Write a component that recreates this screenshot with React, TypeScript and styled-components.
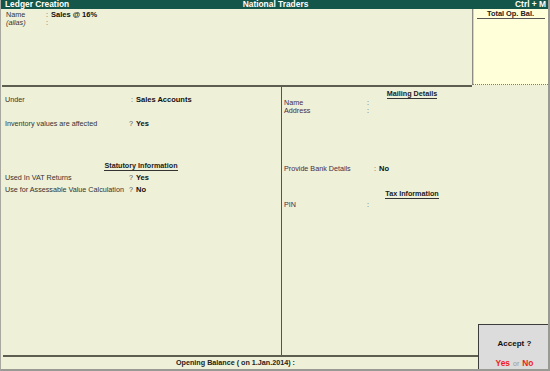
import styled, { createGlobalStyle } from "styled-components";

const GlobalStyle = createGlobalStyle`
  html, body {
    margin: 0;
    padding: 0;
    background: #eef0d7;
  }
  * {
    box-sizing: border-box;
  }
`;

const Screen = styled.div`
  position: relative;
  width: 550px;
  height: 371px;
  display: flex;
  flex-direction: column;
  background: #eef0d7;
  border-left: 1px solid #a8a8a0;
  border-right: 2px solid #9a9a94;
  border-bottom: 2px solid #9a9a94;
  font-family: "Liberation Sans", Arial, sans-serif;
  font-size: 7.2px;
  color: #333;
  overflow: hidden;
`;

const TitleBar = styled.div`
  height: 9px;
  flex: 0 0 9px;
  display: grid;
  grid-template-columns: 1fr auto 1fr;
  align-items: center;
  padding: 0 2px 0 4px;
  background: #14574a;
  color: #fff;
  font-weight: bold;
  font-size: 8.4px;
  line-height: 9px;
  white-space: nowrap;
`;

const TitleRight = styled.span`
  justify-self: end;
`;

const Top = styled.div`
  height: 78px;
  flex: 0 0 78px;
  display: flex;
`;

const TopMain = styled.div`
  flex: 1;
  padding: 2px 4px 0;
  border-bottom: 2px solid #5d5d50;
  margin-left: 1px;
`;

const OpBalBox = styled.div`
  width: 76px;
  height: 76px;
  background: #ffffd9;
  border-left: 1px solid #8c8c84;
  border-bottom: 1px dotted #7c7c74;
  box-shadow: inset 1px 0 0 #d4d4c4;
  padding-top: 1px;
  display: flex;
  flex-direction: column;
  align-items: center;
`;

const OpBalTitle = styled.div`
  width: 68px;
  text-align: center;
  font-weight: bold;
  font-size: 7.4px;
  line-height: 8px;
  color: #222;
  border-bottom: 1px solid #555;
`;

const Row = styled.div<{ $labelWidth: number; $gap?: number }>`
  display: grid;
  grid-template-columns: ${(p) => p.$labelWidth}px auto 1fr;
  line-height: 8px;
  height: 8px;
  margin-top: ${(p) => p.$gap ?? 0}px;
  white-space: nowrap;
`;

const Label = styled.span<{ $italic?: boolean; $tone?: "left" | "right" }>`
  color: ${(p) => (p.$tone === "right" ? "#4c2944" : "#333")};
  font-style: ${(p) => (p.$italic ? "italic" : "normal")};
`;

const Mark = styled.span`
  color: #555;
  padding-right: 3px;
`;

const Value = styled.span`
  font-weight: bold;
  font-size: 7.5px;
  color: #111;
`;

const Middle = styled.div`
  flex: 1;
  display: flex;
`;

const LeftPane = styled.div`
  width: 280px;
  padding: 9px 4px 0;
`;

const RightPane = styled.div`
  flex: 1;
  border-left: 1px solid #55554a;
  padding: 3px 2px 0 2px;
`;

const SectionHead = styled.div<{ $gap: number; $shift?: number }>`
  margin-top: ${(p) => p.$gap}px;
  text-align: center;
  line-height: 8px;
  height: 9px;
  font-weight: bold;
  font-size: 7.2px;
  color: #222;
  padding-right: ${(p) => p.$shift ?? 0}px;
`;

const Underlined = styled.span`
  border-bottom: 1px solid #333;
`;

const Footer = styled.div`
  height: 14px;
  flex: 0 0 14px;
  margin-left: 2px;
  border-top: 2px solid #5d5d50;
  padding-right: 80px;
  text-align: center;
  line-height: 12px;
  font-weight: bold;
  font-size: 7.2px;
  color: #222;
`;

const AcceptBox = styled.div`
  position: absolute;
  left: 477px;
  top: 324px;
  width: 74px;
  height: 48px;
  background: #dcdcdc;
  border: 1px solid #3c3c3c;
  border-right-width: 2px;
  display: flex;
  flex-direction: column;
  align-items: center;
  justify-content: space-between;
  padding: 14px 0 2px;
  font-weight: bold;
`;

const AcceptTitle = styled.div`
  font-size: 8px;
  line-height: 9px;
  color: #111;
`;

const Choices = styled.div`
  font-size: 8.4px;
  line-height: 10px;
  color: #f01a1a;
`;

const Or = styled.span`
  color: #9a9a9a;
  font-weight: normal;
  font-size: 7px;
  padding: 0 3px;
`;

export default function App() {
  return (
    <>
      <GlobalStyle />
      <Screen>
        <TitleBar>
          <span>Ledger Creation</span>
          <span>National Traders</span>
          <TitleRight>Ctrl + M</TitleRight>
        </TitleBar>

        <Top>
          <TopMain>
            <Row $labelWidth={40}>
              <Label>Name</Label>
              <Mark>:</Mark>
              <Value>Sales @ 16%</Value>
            </Row>
            <Row $labelWidth={40}>
              <Label $italic>(alias)</Label>
              <Mark>:</Mark>
              <span />
            </Row>
          </TopMain>
          <OpBalBox>
            <OpBalTitle>Total Op. Bal.</OpBalTitle>
          </OpBalBox>
        </Top>

        <Middle>
          <LeftPane>
            <Row $labelWidth={126}>
              <Label>Under</Label>
              <Mark>:</Mark>
              <Value>Sales Accounts</Value>
            </Row>
            <Row $labelWidth={124} $gap={16}>
              <Label>Inventory values are affected</Label>
              <Mark>?</Mark>
              <Value>Yes</Value>
            </Row>
            <SectionHead $gap={34}>
              <Underlined>Statutory Information</Underlined>
            </SectionHead>
            <Row $labelWidth={124} $gap={3}>
              <Label>Used In VAT Returns</Label>
              <Mark>?</Mark>
              <Value>Yes</Value>
            </Row>
            <Row $labelWidth={124} $gap={4}>
              <Label>Use for Assessable Value Calculation</Label>
              <Mark>?</Mark>
              <Value>No</Value>
            </Row>
          </LeftPane>

          <RightPane>
            <SectionHead $gap={0} $shift={6}>
              <Underlined>Mailing Details</Underlined>
            </SectionHead>
            <Row $labelWidth={83}>
              <Label $tone="right">Name</Label>
              <Mark>:</Mark>
              <span />
            </Row>
            <Row $labelWidth={83}>
              <Label $tone="right">Address</Label>
              <Mark>:</Mark>
              <span />
            </Row>
            <Row $labelWidth={90} $gap={50}>
              <Label $tone="right">Provide Bank Details</Label>
              <Mark>:</Mark>
              <Value>No</Value>
            </Row>
            <SectionHead $gap={17} $shift={6}>
              <Underlined>Tax Information</Underlined>
            </SectionHead>
            <Row $labelWidth={83} $gap={2}>
              <Label $tone="right">PIN</Label>
              <Mark>:</Mark>
              <span />
            </Row>
          </RightPane>
        </Middle>

        <Footer>Opening Balance ( on 1.Jan.2014) :</Footer>

        <AcceptBox>
          <AcceptTitle>Accept ?</AcceptTitle>
          <Choices>
            Yes<Or>or</Or>No
          </Choices>
        </AcceptBox>
      </Screen>
    </>
  );
}
